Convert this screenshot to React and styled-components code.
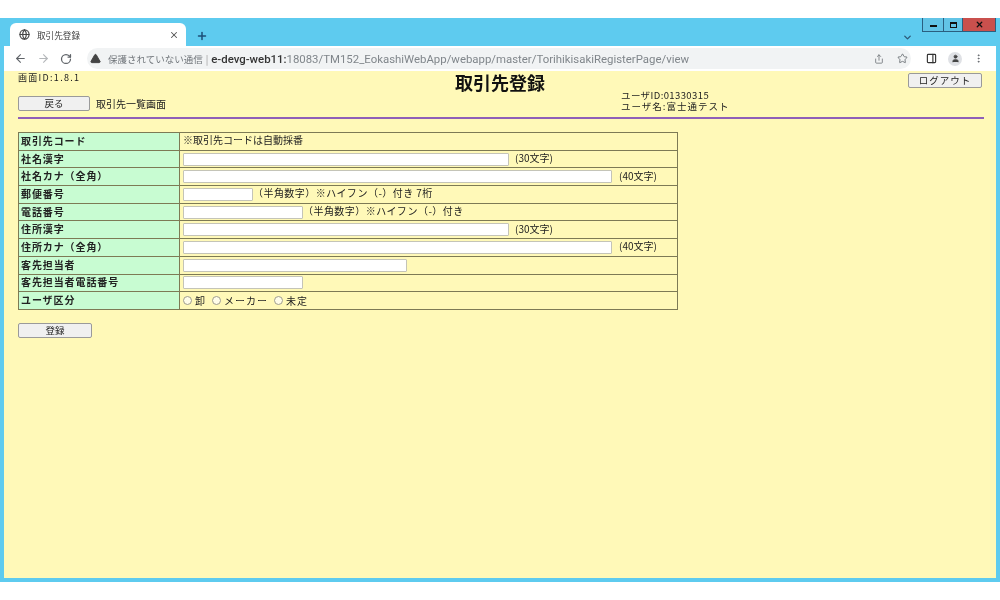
import styled, { createGlobalStyle } from "styled-components"
import { ArrowLeft, ArrowRight, RotateCw, TriangleAlert, Share, Star, PanelRight, User, MoreVertical, Globe, X, Plus, ChevronDown } from "lucide-react"

const GlobalStyle = createGlobalStyle`
  html, body {
    margin: 0;
    padding: 0;
    background: #fff;
  }
`

const Screen = styled.div`
  width: 1000px;
  height: 600px;
  padding: 18px 0;
  box-sizing: border-box;
  filter: blur(0.35px);
  font-family: "Noto Sans CJK JP", "Liberation Sans", sans-serif;
`

const Browser = styled.div`
  height: 564px;
  background: #5ecbef;
  padding: 0 4px 4px;
  box-sizing: border-box;
  display: flex;
  flex-direction: column;
`

const TabStrip = styled.div`
  height: 28px;
  display: flex;
  align-items: flex-end;
  padding-left: 6px;
  position: relative;
`

const Tab = styled.div`
  width: 176px;
  height: 23px;
  background: #fff;
  border-radius: 6px 6px 0 0;
  display: flex;
  align-items: center;
  padding: 0 7px 0 9px;
  box-sizing: border-box;
  font-size: 8.6px;
  color: #444;
  gap: 7px;
`

const TabTitle = styled.span`
  flex: 1;
`

const NewTab = styled.div`
  display: flex;
  margin: 0 0 4px 10px;
  color: #1d4f78;
`

const TabMenu = styled.div`
  position: absolute;
  right: 83px;
  bottom: 3px;
  display: flex;
  color: #2c5a78;
`

const WindowButtons = styled.div`
  position: absolute;
  top: 0;
  right: 0;
  display: flex;
  height: 13px;
  border: solid #2a5f80;
  border-width: 0 0 1px 1px;
`

const WindowButton = styled.div`
  width: ${(p) => p.$w}px;
  background: ${(p) => p.$bg};
  border-right: 1px solid #2a5f80;
  display: flex;
  align-items: center;
  justify-content: center;
  color: #111;
  box-sizing: border-box;
`

const MinGlyph = styled.span`
  width: 7px;
  height: 2px;
  margin-top: 3px;
  background: #111;
`

const MaxGlyph = styled.span`
  width: 7px;
  height: 6px;
  border: 1.5px solid #111;
  border-top-width: 2.5px;
  box-sizing: border-box;
`

const Toolbar = styled.div`
  height: 25px;
  background: #fff;
  display: flex;
  align-items: center;
  padding: 0 12px 0 10px;
  color: #5f6368;
  gap: 10px;
`

const Address = styled.div`
  width: 825px;
  height: 21px;
  margin-left: 5px;
  background: #f1f3f4;
  border-radius: 11px;
  display: flex;
  align-items: center;
  padding: 0 3px 0 3px;
  box-sizing: border-box;
  font-size: 9.5px;
  color: #70757a;
  white-space: nowrap;
`

const Warning = styled.span`
  display: flex;
  margin-right: 7px;
  color: #444;
`

const Divider = styled.span`
  margin: 0 3px;
  color: #999;
`

const Host = styled.span`
  font-family: Roboto, sans-serif;
  font-size: 11.4px;
  font-weight: 500;
  color: #333;
`

const UrlRest = styled.span`
  font-family: Roboto, sans-serif;
  font-size: 11.4px;
  color: #80868b;
`

const AddressIcons = styled.div`
  margin-left: auto;
  display: flex;
  align-items: center;
  gap: 13px;
`

const ToolIcons = styled.div`
  display: flex;
  align-items: center;
  gap: 11px;
  margin-left: 5px;
`

const Avatar = styled.span`
  width: 14px;
  height: 14px;
  border-radius: 50%;
  background: #dfe1e5;
  display: flex;
  align-items: center;
  justify-content: center;
  color: #444;
`

const Page = styled.div`
  flex: 1;
  background: #fff9b8;
  padding: 0 12px 0 14px;
  color: #222;
  font-size: 10px;
  line-height: 1;
`

const PageHead = styled.div`
  display: grid;
  grid-template-columns: 437px 166px 287px 74px;
  height: 46px;
  border-bottom: 2px solid #8f5fb8;
`

const LeftHead = styled.div`
  display: flex;
  flex-direction: column;
  justify-content: space-between;
  padding: 2px 0 6px;
`

const ScreenId = styled.div`
  font-size: 9px;
  letter-spacing: 1.3px;
`

const BackRow = styled.div`
  display: flex;
  align-items: center;
  gap: 6px;
  font-size: 10px;
`

const Button = styled.button`
  width: ${(p) => p.$w}px;
  height: 15px;
  padding: 0;
  background: #f0f0f0;
  border: 1px solid #9a9a9a;
  border-radius: 2px;
  font: inherit;
  font-size: 9.5px;
  color: #222;
  letter-spacing: ${(p) => p.$spacing || 0}px;
`

const Title = styled.h1`
  margin: 1px 0 0;
  font-size: 18px;
  font-weight: 700;
  line-height: 20px;
  white-space: nowrap;
  color: #111;
`

const UserInfo = styled.div`
  padding-top: 19px;
  font-size: 9.5px;
  line-height: 11px;
  white-space: nowrap;
`

const UserLine = styled.div`
  letter-spacing: ${(p) => p.$spacing}px;
`

const LogoutSlot = styled.div`
  padding-top: 2px;
`

const FormTable = styled.table`
  margin-top: 13px;
  width: 660px;
  height: 177px;
  border-collapse: collapse;
  table-layout: fixed;
  border: 1px solid #7d7a55;
`

const Row = styled.tr`
  height: 17.7px;
`

const Label = styled.th`
  width: 158px;
  padding: 0 0 1px 2px;
  background: #c8fcd2;
  border: 1px solid #7d7a55;
  font-size: 10px;
  font-weight: 700;
  text-align: left;
  letter-spacing: 0.9px;
  white-space: nowrap;
`

const Cell = styled.td`
  padding: 0 0 0 3px;
  border: 1px solid #7d7a55;
  white-space: nowrap;
`

const NoteText = styled.span`
  position: relative;
  top: -1px;
  letter-spacing: ${(p) => p.$spacing || 0}px;
`

const CellRow = styled.div`
  display: flex;
  align-items: center;
  gap: ${(p) => p.$gap}px;
`

const Field = styled.input`
  width: ${(p) => p.$w}px;
  height: 13px;
  padding: 0;
  box-sizing: border-box;
  background: #fff;
  border: 1px solid #c4c4b8;
  border-radius: 1px;
`

const Radio = styled.input`
  width: 9px;
  height: 9px;
  margin: 0 3px 0 0;
  accent-color: #888;
  opacity: 0.7;
`

const RadioLabel = styled.label`
  display: flex;
  align-items: center;
  letter-spacing: 1px;
`

const Submit = styled.div`
  margin-top: 13px;
`

const rows = [
  { label: "社名漢字", w: 326, gap: 6, note: "(30文字)" },
  { label: "社名カナ（全角）", w: 429, gap: 7, note: "(40文字)" },
  { label: "郵便番号", w: 70, gap: 0, spacing: 0.45, note: "（半角数字）※ハイフン（-）付き 7桁" },
  { label: "電話番号", w: 120, gap: 0, spacing: 0.45, note: "（半角数字）※ハイフン（-）付き" },
  { label: "住所漢字", w: 326, gap: 6, note: "(30文字)" },
  { label: "住所カナ（全角）", w: 429, gap: 7, note: "(40文字)" },
  { label: "客先担当者", w: 224, gap: 0 },
  { label: "客先担当者電話番号", w: 120, gap: 0 },
]

export default function App() {
  return (
    <Screen>
      <GlobalStyle />
      <Browser>
        <TabStrip>
          <Tab>
            <Globe size={11} color="#444" strokeWidth={2.5} />
            <TabTitle>取引先登録</TabTitle>
            <X size={10} color="#555" strokeWidth={2.5} />
          </Tab>
          <NewTab><Plus size={12} strokeWidth={3} /></NewTab>
          <TabMenu><ChevronDown size={11} strokeWidth={3} /></TabMenu>
          <WindowButtons>
            <WindowButton $w={21} $bg="#62c4e6"><MinGlyph /></WindowButton>
            <WindowButton $w={19} $bg="#62c4e6"><MaxGlyph /></WindowButton>
            <WindowButton $w={33} $bg="#c9504d"><X size={9} strokeWidth={3.5} /></WindowButton>
          </WindowButtons>
        </TabStrip>
        <Toolbar>
          <ArrowLeft size={13} />
          <ArrowRight size={13} color="#b4b7ba" />
          <RotateCw size={12} strokeWidth={2.5} />
          <Address>
            <Warning><TriangleAlert size={11} fill="#444" color="#444" /></Warning>
            保護されていない通信
            <Divider>|</Divider>
            <Host>e-devg-web11:</Host>
            <UrlRest>18083/TM152_EokashiWebApp/webapp/master/TorihikisakiRegisterPage/view</UrlRest>
            <AddressIcons>
              <Share size={10} />
              <Star size={11} />
            </AddressIcons>
          </Address>
          <ToolIcons>
            <PanelRight size={11} color="#333" strokeWidth={2.5} />
            <Avatar><User size={9} fill="#444" /></Avatar>
            <MoreVertical size={11} />
          </ToolIcons>
        </Toolbar>
        <Page>
          <PageHead>
            <LeftHead>
              <ScreenId>画面ID:1.8.1</ScreenId>
              <BackRow>
                <Button $w={72} type="button">戻る</Button>
                取引先一覧画面
              </BackRow>
            </LeftHead>
            <Title>取引先登録</Title>
            <UserInfo>
              <UserLine $spacing={0.4}>ユーザID:01330315</UserLine>
              <UserLine $spacing={1}>ユーザ名:富士通テスト</UserLine>
            </UserInfo>
            <LogoutSlot>
              <Button $w={74} $spacing={1} type="button">ログアウト</Button>
            </LogoutSlot>
          </PageHead>
          <FormTable>
            <tbody>
              <Row>
                <Label>取引先コード</Label>
                <Cell><NoteText>※取引先コードは自動採番</NoteText></Cell>
              </Row>
              {rows.map((row) => (
                <Row key={row.label}>
                  <Label>{row.label}</Label>
                  <Cell>
                    <CellRow $gap={row.gap}>
                      <Field $w={row.w} readOnly />
                      {row.note && <NoteText $spacing={row.spacing}>{row.note}</NoteText>}
                    </CellRow>
                  </Cell>
                </Row>
              ))}
              <Row>
                <Label>ユーザ区分</Label>
                <Cell>
                  <CellRow $gap={6}>
                    <RadioLabel><Radio type="radio" name="kubun" />卸</RadioLabel>
                    <RadioLabel><Radio type="radio" name="kubun" />メーカー</RadioLabel>
                    <RadioLabel><Radio type="radio" name="kubun" />未定</RadioLabel>
                  </CellRow>
                </Cell>
              </Row>
            </tbody>
          </FormTable>
          <Submit>
            <Button $w={74} type="button">登録</Button>
          </Submit>
        </Page>
      </Browser>
    </Screen>
  )
}
